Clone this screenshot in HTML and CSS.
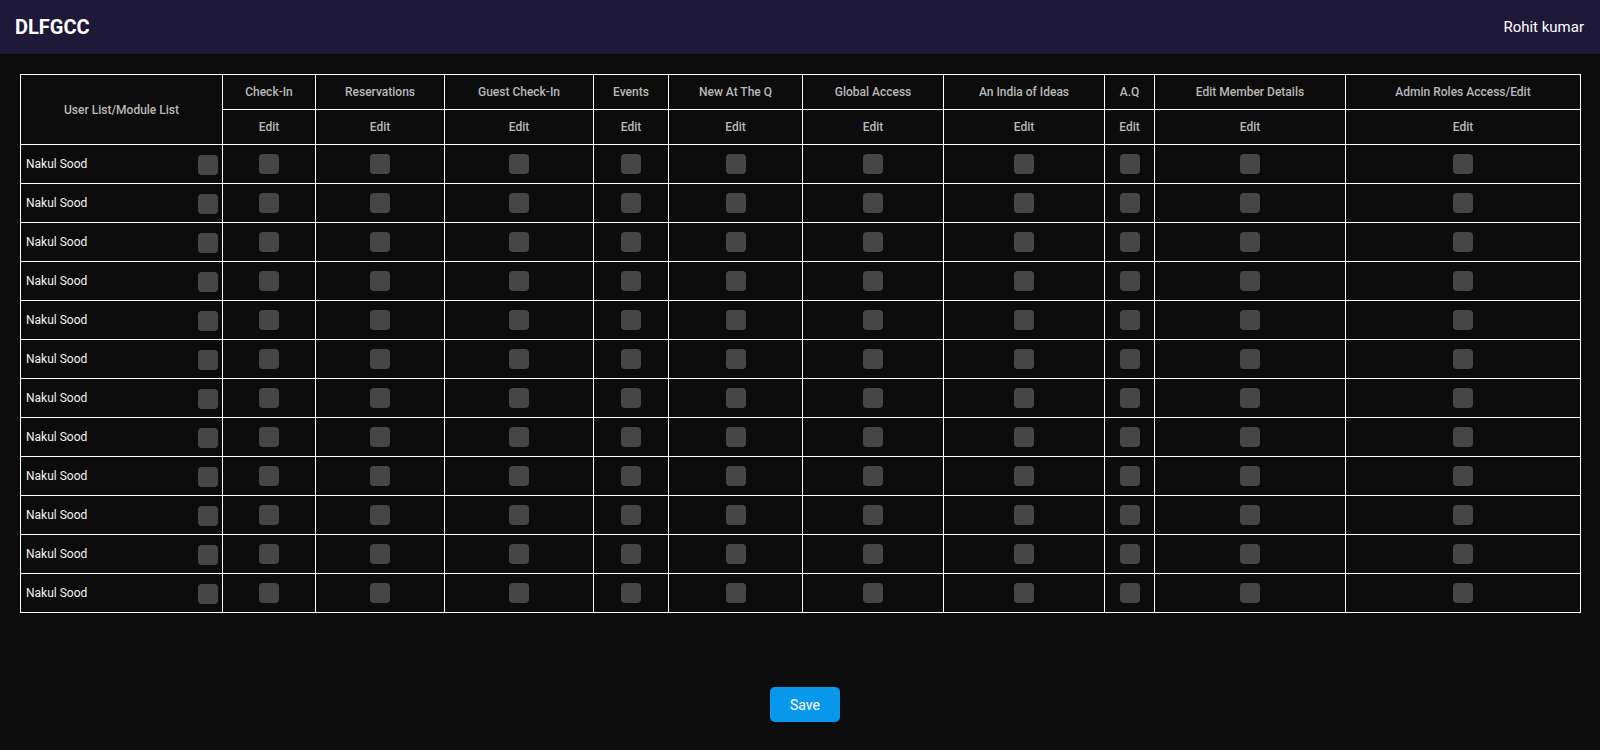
FILE: index.html
```html
<!DOCTYPE html>
<html>
<head>
<meta charset="utf-8">
<link rel="stylesheet" href="styles.css">
</head>
<body>
<header class="topbar">
  <div class="brand">DLFGCC</div>
  <div class="user">Rohit kumar</div>
</header>
<main class="content">
  <table class="perm">
    <colgroup>
      <col style="width:202px"><col style="width:93px"><col style="width:129px"><col style="width:149px"><col style="width:75px"><col style="width:134px"><col style="width:141px"><col style="width:161px"><col style="width:50px"><col style="width:191px"><col style="width:235px">
    </colgroup>
    <thead>
      <tr class="hrow">
        <th rowspan="2" class="first">User List/Module List</th>
        <th>Check-In</th><th>Reservations</th><th>Guest Check-In</th><th>Events</th><th>New At The Q</th><th>Global Access</th><th>An India of Ideas</th><th>A.Q</th><th>Edit Member Details</th><th>Admin Roles Access/Edit</th>
      </tr>
      <tr class="hrow">
        <th>Edit</th><th>Edit</th><th>Edit</th><th>Edit</th><th>Edit</th><th>Edit</th><th>Edit</th><th>Edit</th><th>Edit</th><th>Edit</th>
      </tr>
    </thead>
    <tbody id="rows"></tbody>
  </table>
  <div class="actions"><button class="save">Save</button></div>
</main>
<script>
  var tb = document.getElementById('rows');
  var html = '';
  for (var i = 0; i < 12; i++) {
    html += '<tr class="drow"><td class="name"><div class="namecell"><span>Nakul Sood</span><span class="cb cb-first"></span></div></td>';
    for (var j = 0; j < 10; j++) html += '<td class="c"><span class="cb"></span></td>';
    html += '</tr>';
  }
  tb.innerHTML = html;
</script>
</body>
</html>
```

FILE: styles.css
```css
* { box-sizing: border-box; }
html, body { margin: 0; padding: 0; }
body {
  background: #0c0c0c;
  font-family: Roboto, "Liberation Sans", sans-serif;
  color: #ffffff;
  width: 1600px;
  height: 750px;
  overflow: hidden;
}
.topbar {
  height: 54px;
  background: #1e1839;
  display: flex;
  align-items: center;
  justify-content: space-between;
  padding: 0 16px 0 15px;
}
.brand {
  font-size: 20px;
  font-weight: 700;
  color: #ffffff;
  letter-spacing: 0;
}
.user {
  font-size: 15px;
  font-weight: 400;
  color: #ffffff;
}
.content {
  padding: 20px 20px 0 20px;
}
.perm {
  width: 1560px;
  table-layout: fixed;
  border-collapse: collapse;
  border: 1px solid #ffffff;
}
.perm th, .perm td {
  border: 1px solid #ffffff;
  padding: 0;
}
.perm th {
  height: 35px;
  font-size: 12px;
  font-weight: 500;
  color: #b9b9b9;
  text-align: center;
  vertical-align: middle;
}
.drow td {
  height: 39px;
  vertical-align: middle;
}
.c { text-align: center; }
.cb {
  display: inline-block;
  width: 20px;
  height: 20px;
  border-radius: 4px;
  background: #464646;
  vertical-align: middle;
}
.namecell {
  display: flex;
  align-items: center;
  justify-content: space-between;
  padding: 0 4px 0 5px;
  font-size: 12px;
  font-weight: 400;
  color: #f2f2f2;
}
.cb-first { margin-top: 2px; }
.actions {
  display: flex;
  justify-content: center;
  padding-top: 74px;
  padding-left: 10px;
}
.save {
  width: 70px;
  height: 35px;
  border: none;
  border-radius: 5px;
  background: #0898ec;
  color: #ffffff;
  font-family: Roboto, "Liberation Sans", sans-serif;
  font-size: 14px;
  font-weight: 400;
}
```
